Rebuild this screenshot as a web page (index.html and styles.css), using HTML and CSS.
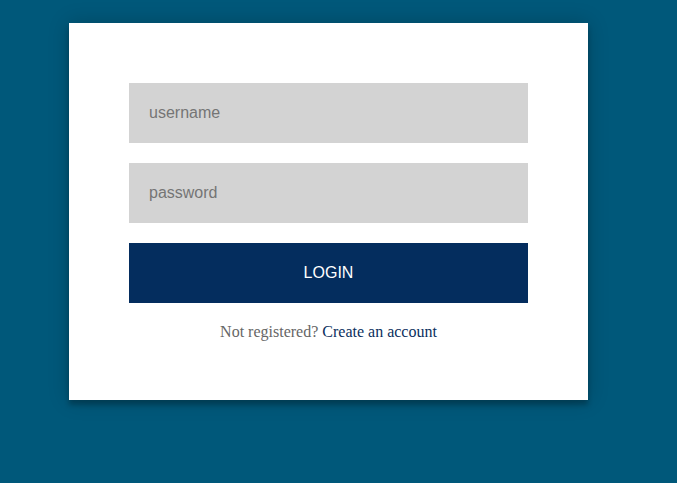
FILE: index.html
```html
<!DOCTYPE html>
<html>
<head>
<meta charset="utf-8">
<link rel="stylesheet" href="styles.css">
</head>
<body>
<div class="card">
  <form class="form">
    <input class="field" type="text" placeholder="username">
    <input class="field" type="password" placeholder="password">
    <button class="btn" type="button">LOGIN</button>
    <p class="message">Not registered? <a href="#">Create an account</a></p>
  </form>
</div>
</body>
</html>
```
FILE: styles.css
```css
html, body {
  margin: 0;
  padding: 0;
  background: #00587a;
  height: 100%;
}
body {
  padding: 23px 0 0 69px;
  box-sizing: border-box;
}
.card {
  width: 519px;
  height: 377px;
  box-sizing: border-box;
  background: #fff;
  padding: 60px;
  box-shadow: 0 0 20px rgba(0,0,0,0.2), 0 5px 5px rgba(0,0,0,0.24);
}
.form {
  display: flex;
  flex-direction: column;
  gap: 20px;
  margin: 0;
}
.field {
  display: block;
  width: 399px;
  height: 60px;
  box-sizing: border-box;
  border: 0;
  outline: 0;
  background: #d3d3d3;
  padding: 0 20px;
  margin: 0;
  font-family: "Liberation Sans", Arial, sans-serif;
  font-size: 16px;
  color: #333;
}
.field::placeholder {
  color: #757575;
}
.btn {
  display: block;
  width: 399px;
  height: 60px;
  border: 0;
  margin: 0;
  background: #042d5e;
  color: #fff;
  font-family: "Liberation Sans", Arial, sans-serif;
  font-size: 16px;
  cursor: pointer;
}
.message {
  margin: 0;
  text-align: center;
  font-family: "Liberation Serif", "Times New Roman", serif;
  font-size: 16px;
  color: #666;
}
.message a {
  color: #0b2f5e;
  text-decoration: none;
}
```
